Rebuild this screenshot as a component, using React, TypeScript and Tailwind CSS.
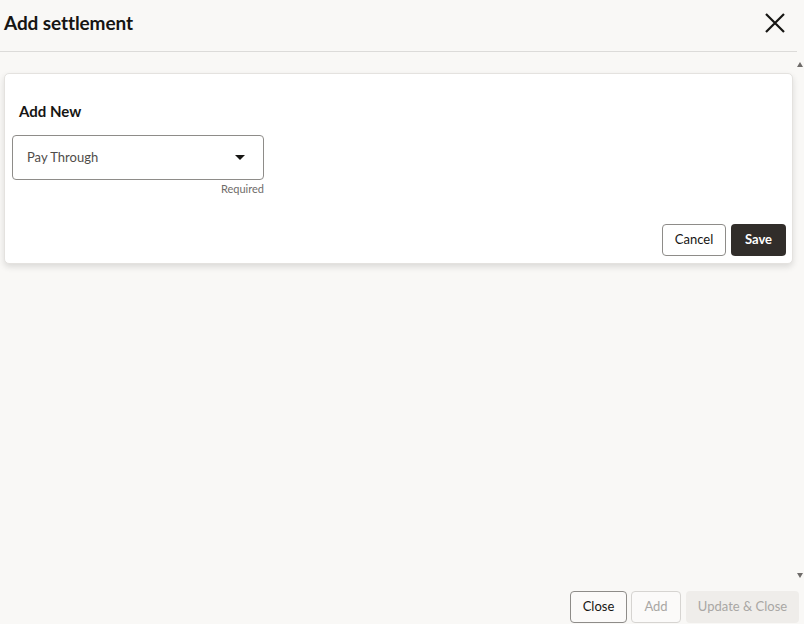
import React from "react";

export default function App() {
  return (
    <div
      className="w-[804px] h-[624px] bg-[#f9f8f6] relative overflow-hidden text-[#161513]"
      style={{ fontFamily: "Lato, 'Noto Sans', sans-serif" }}
    >
      {/* Header */}
      <div className="h-[51px] flex items-center justify-between pl-[4px] pr-[18px] pb-[6px]">
        <h1 className="text-[19px] font-bold leading-none tracking-[-0.1px]">Add settlement</h1>
        <svg width="22" height="22" viewBox="0 0 22 22" className="mt-[1px]">
          <path d="M2 2 L20 20 M20 2 L2 20" stroke="#161513" strokeWidth="2.2" />
        </svg>
      </div>
      <div className="w-[797px] border-t border-[#dcdbd9]" />

      {/* Scroll area */}
      <div className="relative h-[536px] pr-[7px]">
        {/* scrollbar arrows */}
        <div className="absolute right-[1px] top-[10px] w-0 h-0 border-l-[3px] border-r-[3px] border-b-[5px] border-l-transparent border-r-transparent border-b-[#6f6c6a]" />
        <div className="absolute right-[1px] bottom-[10px] w-0 h-0 border-l-[3px] border-r-[3px] border-t-[5px] border-l-transparent border-r-transparent border-t-[#6f6c6a]" />

        <div className="pt-[21px] pl-[4px] w-[793px]">
          <div className="bg-white rounded-[5px] border border-[#e4e2df] shadow-[0_3px_6px_rgba(0,0,0,0.12)] h-[191px] relative">
            <div className="pl-[14px] pt-[28px] text-[15px] font-bold leading-[18px]">Add New</div>
            <div className="pl-[7px] pt-[15px] w-[259px]">
              <div className="h-[45px] border border-[#8e8c89] rounded-[4px] flex items-center justify-between pl-[14px] pr-[18px]">
                <span className="text-[13px] text-[#4f4c49]">Pay Through</span>
                <div className="w-0 h-0 border-l-[5px] border-r-[5px] border-t-[5px] border-l-transparent border-r-transparent border-t-[#161513]" />
              </div>
              <div className="text-right text-[11px] text-[#6f6c6a] leading-[13px] mt-[2px]">Required</div>
            </div>
            <div className="absolute right-[6px] bottom-[7px] flex gap-[5px]">
              <button className="h-[32px] w-[64px] rounded-[4px] border border-[#8e8c89] bg-white text-[13px] text-[#161513]">
                Cancel
              </button>
              <button className="h-[32px] w-[55px] rounded-[4px] bg-[#312d2a] text-white text-[13px] font-bold">
                Save
              </button>
            </div>
          </div>
        </div>
      </div>

      {/* Footer */}
      <div className="absolute right-[5px] bottom-[1px] flex gap-[4px]">
        <button className="h-[32px] w-[57px] rounded-[4px] border border-[#8e8c89] bg-[#fbfaf9] text-[13px] text-[#161513]">
          Close
        </button>
        <button className="h-[32px] w-[50px] rounded-[4px] border border-[#d6d4d1] bg-[#fbfaf9] text-[13px] text-[#a9a7a4]">
          Add
        </button>
        <button className="h-[32px] w-[113px] rounded-[4px] bg-[#efedea] text-[13px] text-[#a9a7a4] ml-[1px]">
          Update &amp; Close
        </button>
      </div>
    </div>
  );
}
